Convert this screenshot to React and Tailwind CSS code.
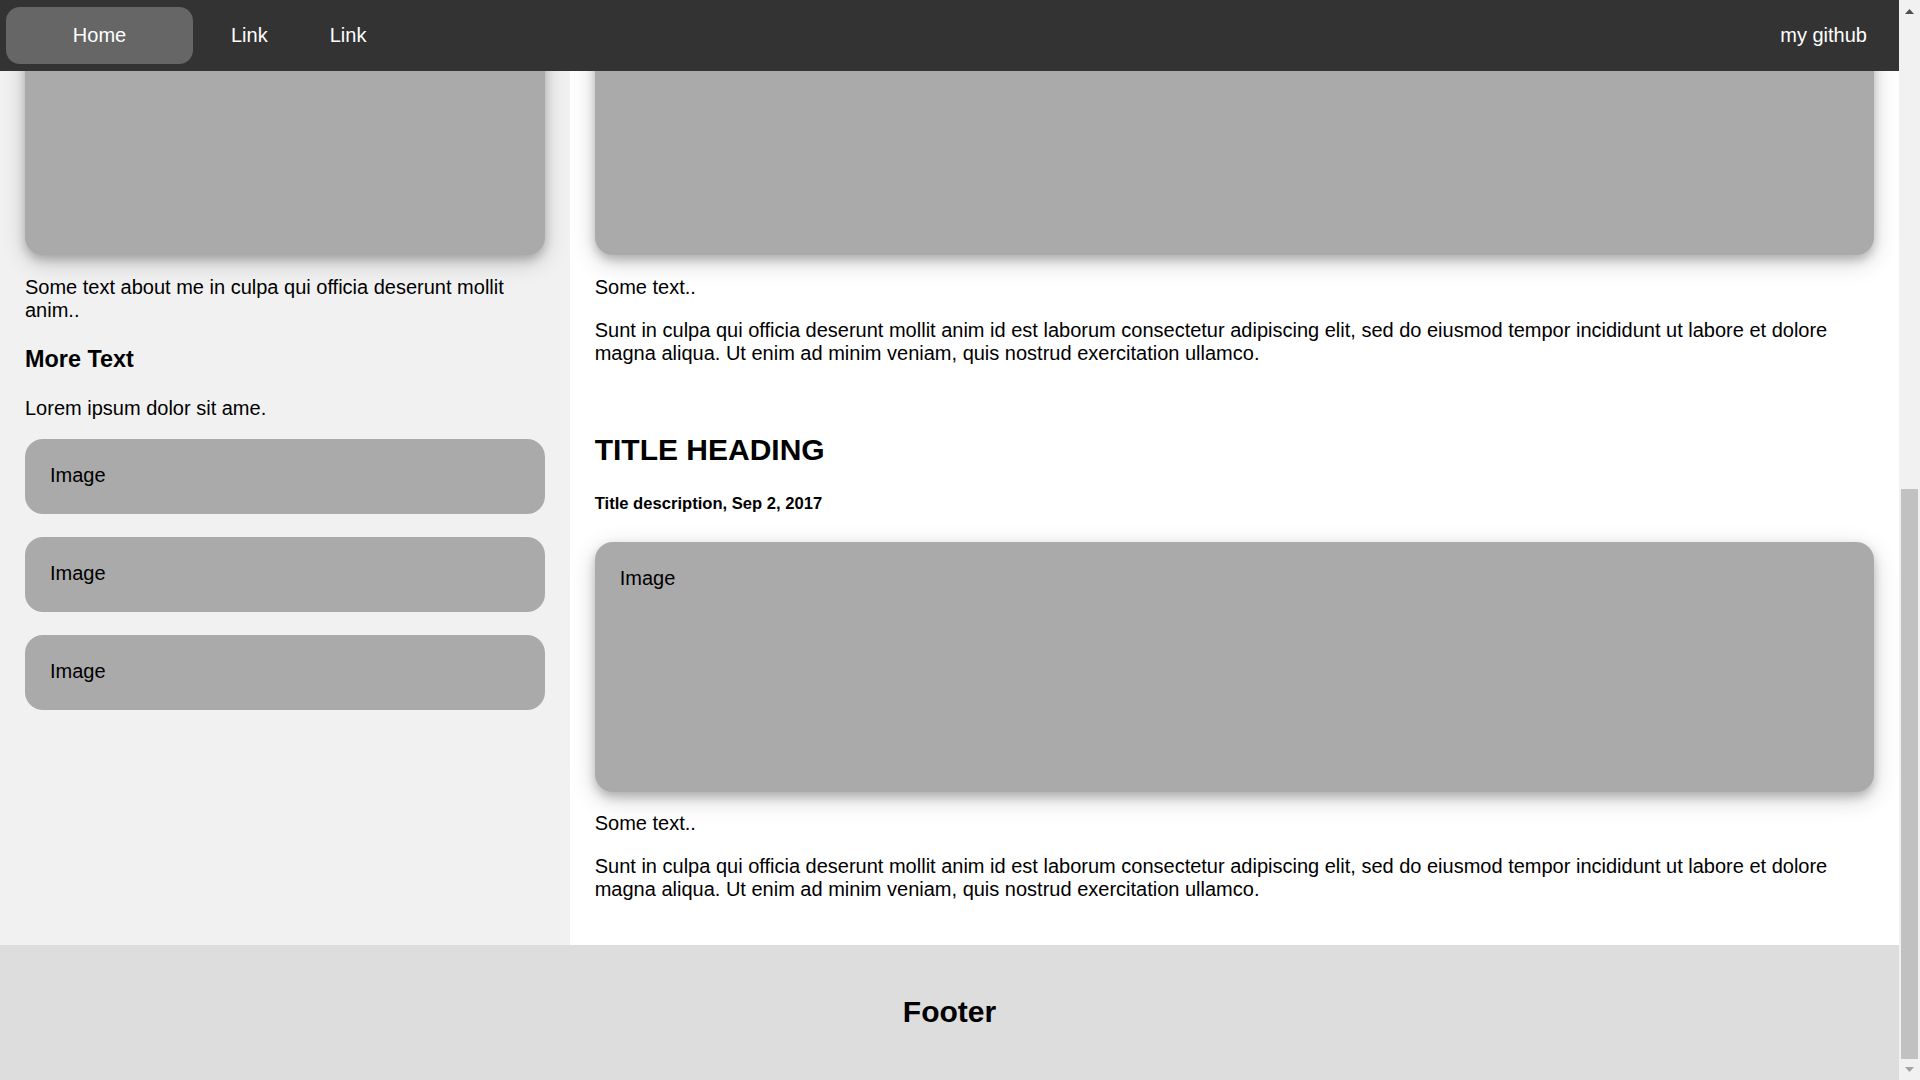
export default function App() {
  const card = "rounded-[18px] bg-[#aaa] shadow-[0_5px_10px_rgba(0,0,0,0.2),0_7px_25px_rgba(0,0,0,0.19)]";
  const para =
    "Sunt in culpa qui officia deserunt mollit anim id est laborum consectetur adipiscing elit, sed do eiusmod tempor incididunt ut labore et dolore magna aliqua. Ut enim ad minim veniam, quis nostrud exercitation ullamco.";
  return (
    <div className="flex h-screen w-full overflow-hidden bg-white font-['Liberation_Sans',Arial,sans-serif] text-black">
      <div className="flex w-[1899px] flex-col">
        <nav className="relative z-10 flex h-[71px] shrink-0 items-center bg-[#333] px-[6px] text-[20px] leading-[23px] text-white">
          <a className="flex h-[57px] w-[187px] items-center justify-center rounded-[14px] bg-[#666]">Home</a>
          <a className="ml-[7px] px-[31px]">Link</a>
          <a className="px-[31px]">Link</a>
          <a className="ml-auto px-[26px]">my github</a>
        </nav>
        <div className="flex h-[874px] shrink-0 overflow-hidden text-[20px] leading-[23px]">
          <aside className="w-[30%] bg-[#f1f1f1] px-[25px]">
            <div className={`-mt-[66px] h-[250px] ${card}`} />
            <p className="mt-[21px]">Some text about me in culpa qui officia deserunt mollit anim..</p>
            <h3 className="mt-[24px] text-[23.4px] font-bold leading-[27px]">More Text</h3>
            <p className="mt-[24px]">Lorem ipsum dolor sit ame.</p>
            <div className="mt-[19px] h-[75px] rounded-[18px] bg-[#aaa] p-[25px]">Image</div>
            <div className="mt-[23px] h-[75px] rounded-[18px] bg-[#aaa] p-[25px]">Image</div>
            <div className="mt-[23px] h-[75px] rounded-[18px] bg-[#aaa] p-[25px]">Image</div>
          </aside>
          <main className="flex-1 px-[25px]">
            <div className={`-mt-[66px] h-[250px] ${card}`} />
            <p className="mt-[21px]">Some text..</p>
            <p className="mt-[20px]">{para}</p>
            <h2 className="mt-[68px] text-[30px] font-bold leading-[34.5px]">TITLE HEADING</h2>
            <h5 className="mt-[26px] text-[16.6px] font-bold leading-[19px]">Title description, Sep 2, 2017</h5>
            <div className={`mt-[29px] h-[250px] p-[25px] ${card}`}>Image</div>
            <p className="mt-[20px]">Some text..</p>
            <p className="mt-[20px]">{para}</p>
          </main>
        </div>
        <footer className="flex h-[135px] shrink-0 items-center justify-center bg-[#ddd]">
          <h2 className="text-[30px] font-bold leading-[34.5px]">Footer</h2>
        </footer>
      </div>
      <div className="flex w-[21px] shrink-0 flex-col bg-[#f1f1f1]">
        <div className="flex h-[21px] items-center justify-center pt-[2px]">
          <svg width="9" height="5" viewBox="0 0 9 5">
            <path d="M4.5 0L9 5H0z" fill="#505050" />
          </svg>
        </div>
        <div className="flex flex-1 flex-col justify-end px-[2px]">
          <div className="h-[570px] bg-[#c1c1c1]" />
        </div>
        <div className="flex h-[21px] items-center justify-center">
          <svg width="9" height="5" viewBox="0 0 9 5">
            <path d="M0 0H9L4.5 5z" fill="#a3a3a3" />
          </svg>
        </div>
      </div>
    </div>
  );
}
